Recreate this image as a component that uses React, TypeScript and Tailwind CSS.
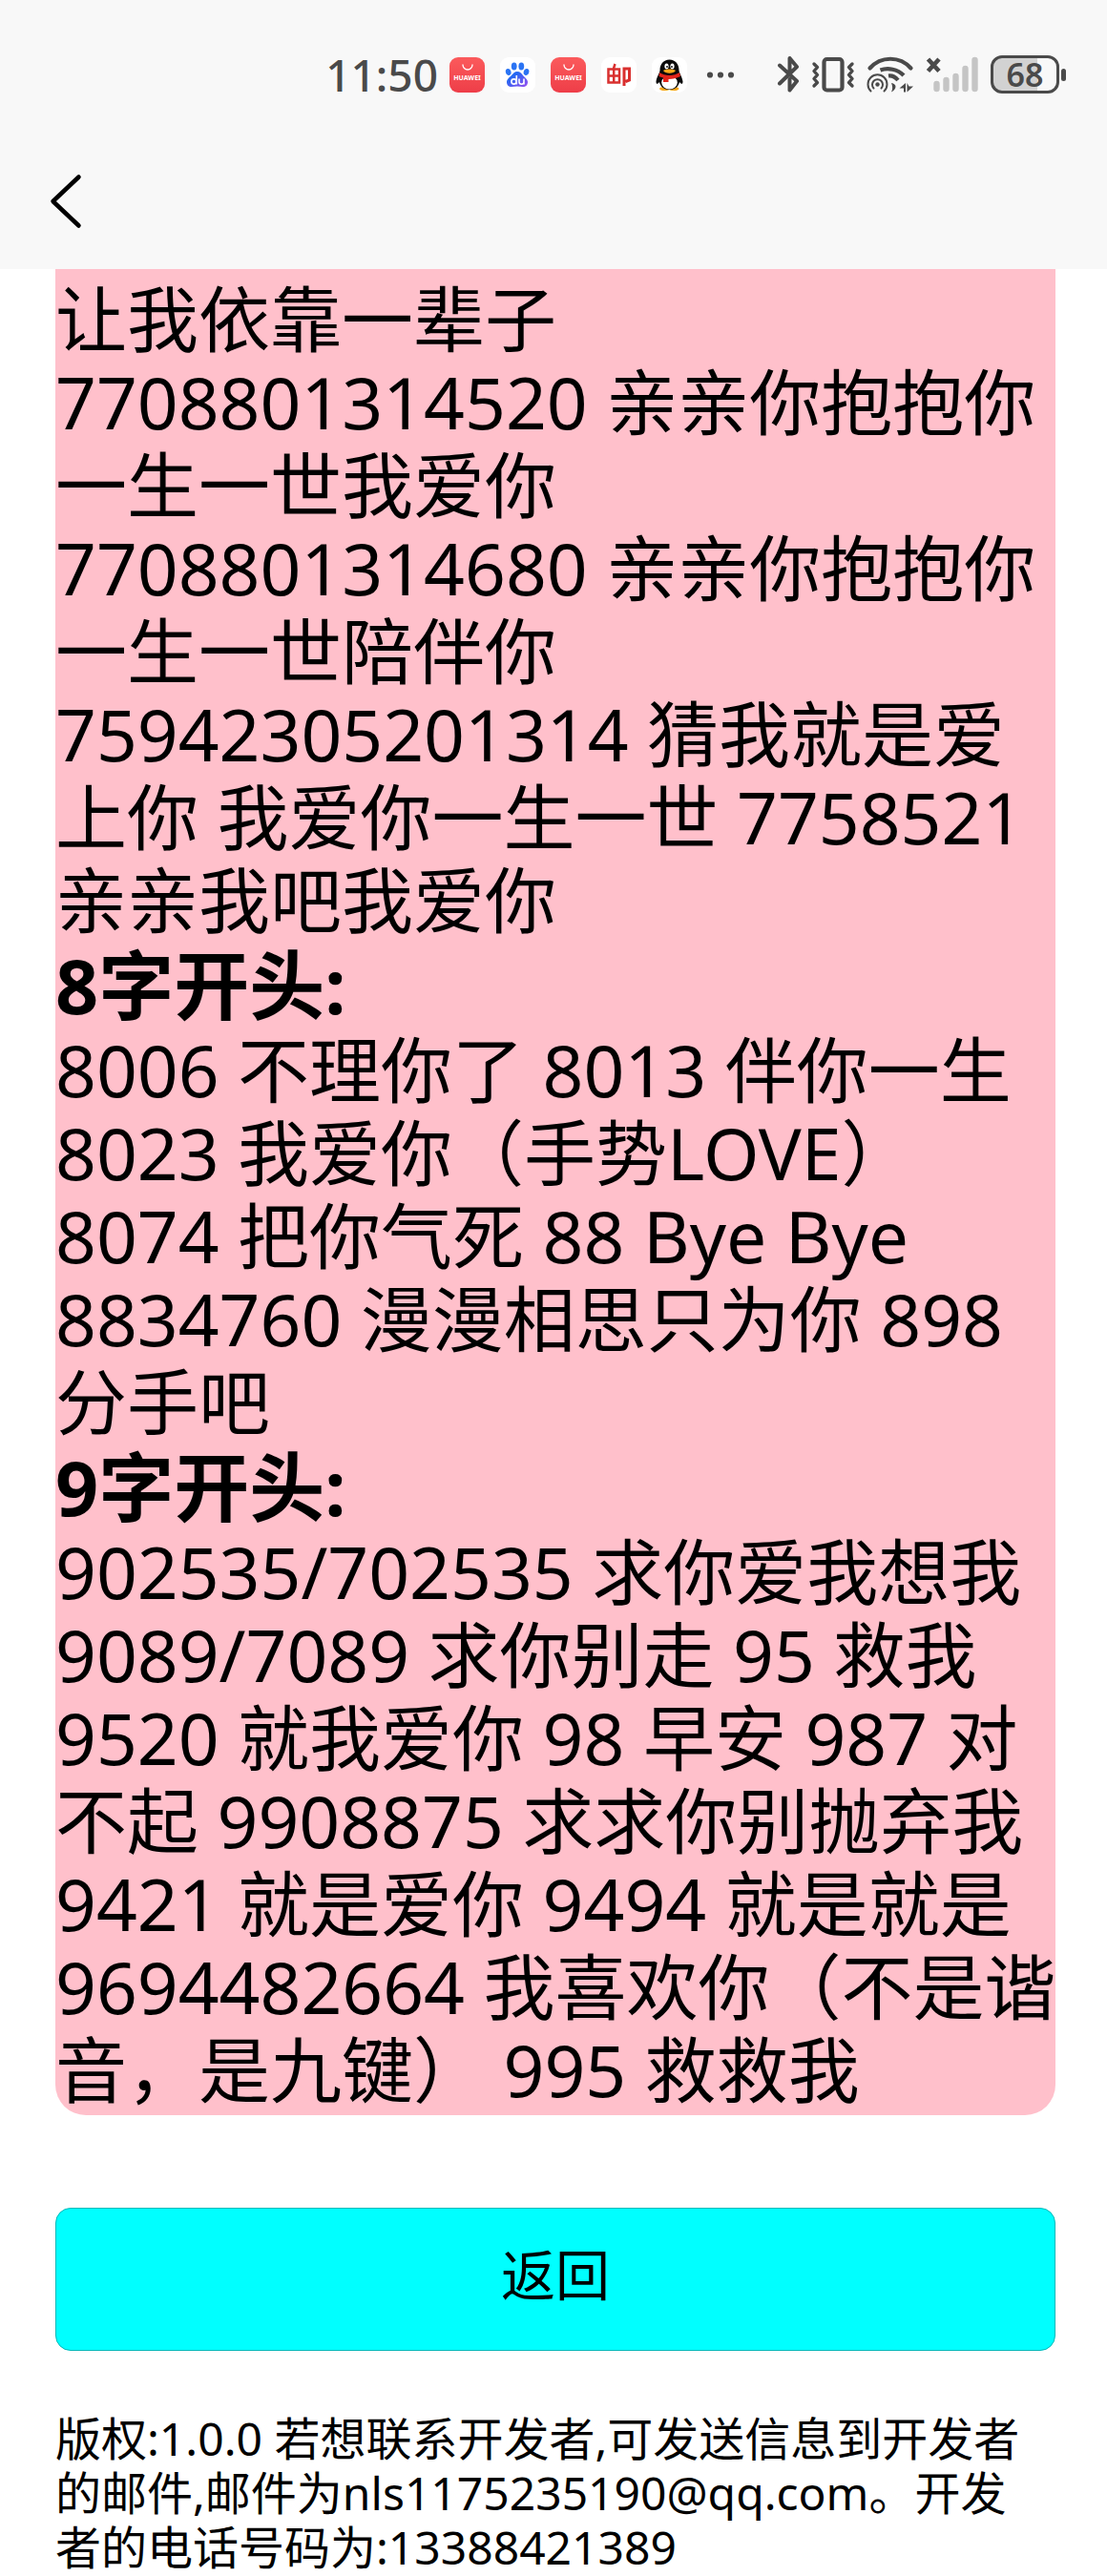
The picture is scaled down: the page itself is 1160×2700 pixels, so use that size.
import React from "react";

const paragraphs: { kind: "text" | "heading"; lines: string[] }[] = [
  {
    kind: "text",
    lines: [
      "让我依靠一辈子",
      "7708801314520 亲亲你抱抱你",
      "一生一世我爱你",
      "7708801314680 亲亲你抱抱你",
      "一生一世陪伴你",
      "75942305201314 猜我就是爱",
      "上你 我爱你一生一世 7758521",
      "亲亲我吧我爱你",
    ],
  },
  { kind: "heading", lines: ["8字开头:"] },
  {
    kind: "text",
    lines: [
      "8006 不理你了 8013 伴你一生",
      "8023 我爱你（手势LOVE）",
      "8074 把你气死 88 Bye Bye",
      "8834760 漫漫相思只为你 898",
      "分手吧",
    ],
  },
  { kind: "heading", lines: ["9字开头:"] },
  {
    kind: "text",
    lines: [
      "902535/702535 求你爱我想我",
      "9089/7089 求你别走 95 救我",
      "9520 就我爱你 98 早安 987 对",
      "不起 9908875 求求你别抛弃我",
      "9421 就是爱你 9494 就是就是",
      "9694482664 我喜欢你（不是谐",
      "音，是九键） 995 救救我",
    ],
  },
];

function HuaweiIcon() {
  return (
    <span className="flex size-[37px] flex-col items-center rounded-[9px] bg-linear-to-b from-[#fb5a5c] to-[#ee3d48] pt-[7px] text-white">
      <svg className="h-[7px] w-3" viewBox="0 0 12 7" fill="none" stroke="currentColor" strokeWidth="1.3" strokeLinecap="round">
        <path d="M1 1a5 5 0 0 0 10 0" />
      </svg>
      <span className="mt-1 text-[7px] leading-[8px] font-bold">HUAWEI</span>
    </span>
  );
}

function BaiduIcon() {
  return (
    <span className="flex size-[37px] justify-center rounded-[9px] bg-white">
      <svg className="size-[37px]" viewBox="0 0 37 37">
        <defs>
          <linearGradient id="paw" x1="0" y1="0" x2="1" y2="1">
            <stop offset="0.3" stopColor="#2468f2" />
            <stop offset="1" stopColor="#9a4df0" />
          </linearGradient>
        </defs>
        <g fill="#2b74f3">
          <ellipse cx="8.700" cy="15.500" rx="2.800" ry="3.500" transform="rotate(-15 8.700 15.500)" />
          <ellipse cx="14.700" cy="9.500" rx="2.900" ry="3.900" />
          <ellipse cx="22.300" cy="9.500" rx="2.900" ry="3.900" />
          <ellipse cx="27.500" cy="15.500" rx="2.800" ry="3.500" transform="rotate(15 27.500 15.500)" />
        </g>
        <path d="M18 15c3 0 4.500 2 6 4s5 4 5 7c0 3-2 5-5 5-2 0-4-.5-6-.5s-4 .5-6 .5c-3 0-5-2-5-5s3-5 5-7 3-4 6-4z" fill="url(#paw)" />
        <g fill="none" stroke="#fff" strokeWidth="1.600">
          <circle cx="14.500" cy="25.500" r="2.600" />
          <path d="M17.300 19v9.500M20 22.500v3.500c0 3 5 3 5 0v-3.500v6" />
        </g>
      </svg>
    </span>
  );
}

function MailIcon() {
  return (
    <span className="flex size-[37px] rounded-[9px] bg-white">
      <svg className="size-[37px]" viewBox="0 0 37 37" fill="none" stroke="#d9302f">
        <path d="M7.500 12.500v14h11.500V12.500zM7.500 19.500h11.500" strokeWidth="2.500" />
        <path d="M14.500 7l-1.300 4v15.500" strokeWidth="2.500" />
        <path d="M24 30V12h5.500v12l-4 1.500" strokeWidth="3" />
      </svg>
    </span>
  );
}

function PenguinIcon() {
  return (
    <span className="flex size-[37px] rounded-[9px] bg-white">
      <svg className="size-[37px]" viewBox="0 0 37 37">
        <ellipse cx="13.500" cy="33" rx="5.500" ry="2" fill="#f8a81b" />
        <ellipse cx="23" cy="33" rx="5.500" ry="2" fill="#f8a81b" />
        <path d="M18.500 2.500c-6.500 0-10 5-10 11 0 3-3.500 7-4 12 0 3 1.500 3 3.500.500C9 31 13 34 18.500 34S28 31 29 26c2 2.500 3.500 2.500 3.500-.500-.500-5-4-9-4-12 0-6-3.500-11-10-11z" fill="#0a0a0a" />
        <ellipse cx="18.500" cy="26.500" rx="8.300" ry="7" fill="#fff" />
        <path d="M8 16c6 4 15 4 21 0l1 4c-4 2-8 3-12.500 3v3H12v-4.500C10 21 8.500 20.500 7.500 20z" fill="#e2231a" />
        <ellipse cx="15.500" cy="9.500" rx="2.100" ry="2.900" fill="#fff" />
        <ellipse cx="21.500" cy="9.500" rx="2.100" ry="2.900" fill="#fff" />
        <circle cx="16" cy="10" r="0.900" />
        <circle cx="21" cy="10" r="0.900" />
        <path d="M12 14c3-2 10-2 13 0-2 3.500-11 3.500-13 0z" fill="#f8a81b" />
      </svg>
    </span>
  );
}

function MoreDots() {
  return (
    <svg className="ml-1 h-[37px] w-[30px]" viewBox="0 0 30 37" fill="#4a4a4a">
      <circle cx="4" cy="18.500" r="3.100" />
      <circle cx="15" cy="18.500" r="3.100" />
      <circle cx="26" cy="18.500" r="3.100" />
    </svg>
  );
}

function BluetoothIcon() {
  return (
    <svg className="h-[38px] w-[24px]" viewBox="0 0 24 38" fill="none" stroke="#4a4a4a" strokeWidth="4" strokeLinecap="round" strokeLinejoin="round">
      <path d="M3 9.500L21 26l-7.500 9.500V24M3 28.500L21 11l-7.500-9V17" />
    </svg>
  );
}

function VibrateIcon() {
  return (
    <svg className="h-[38px] w-[46px]" viewBox="0 0 46 38" fill="none" stroke="#4a4a4a" strokeLinejoin="round" strokeLinecap="round">
      <rect x="13.500" y="3" width="19" height="32.500" rx="3" strokeWidth="4.200" />
      <path d="M3 8l3.500 3.500L3 15.500l3.500 4L3 23.500l3.500 4L3 31M43 8l-3.500 3.500 3.500 4-3.500 4 3.500 4-3.500 4L43 31" strokeWidth="3.400" />
    </svg>
  );
}

function WifiIcon() {
  return (
    <svg className="h-[38px] w-[50px]" viewBox="0 0 50 38" fill="none" stroke="#4a4a4a" strokeLinecap="round">
      <path d="M3.500 12.500C15-.5 35-.5 46.500 12.500" strokeWidth="4.200" />
      <path d="M14.500 14.500c8-3 18-1 24.500 5.500" strokeWidth="4.200" strokeLinecap="butt" />
      <path d="M23 20.500c4-.5 7 1 10 4.500" strokeWidth="4.200" strokeLinecap="butt" />
      <path d="M4.500 36.500a10 10 0 1 1 14 0" strokeWidth="2" />
      <path d="M7.500 33.500a5.500 5.500 0 1 1 8 0" strokeWidth="2" />
      <g fill="#4a4a4a" stroke="none">
        <circle cx="11.500" cy="29.500" r="2.200" />
        <path d="M26 28c6 1 6 6 0 9.500 1.500-3 1.500-6 0-9.500zM34.500 33.500l6.500-5.500v9.500h-2v-4zM42.500 28v9.500l6.500-6h-4.500z" />
      </g>
    </svg>
  );
}

function SignalIcon() {
  return (
    <svg className="h-[38px] w-[56px]" viewBox="0 0 56 38" strokeLinecap="round" fill="none">
      <path d="M2.500 3l11.500 12.500M14 3L2.500 15.500" stroke="#4a4a4a" strokeWidth="4.600" strokeLinecap="butt" />
      <path d="M11.500 29v5M21.500 25v9M31.500 21v13M41.500 13v21M51.500 4v30" stroke="#c5c5c5" strokeWidth="6.400" />
    </svg>
  );
}

function Battery() {
  return (
    <span className="flex items-center gap-[2px] text-[#4a4a4a]">
      <span className="flex h-10 w-[72px] items-center justify-center rounded-[12px] border-[3px] border-current bg-linear-to-r from-[#d2d2d2] from-70% to-[#f8f8f8] to-70% font-['Noto_Sans',sans-serif] text-[34px] leading-none font-semibold">
        68
      </span>
      <span className="h-[13px] w-[5px] rounded-full bg-current" />
    </span>
  );
}

function StatusBar() {
  return (
    <div className="flex items-center justify-end pt-[58px] pr-[43px]">
      <span className="mr-3 font-['Noto_Sans',sans-serif] text-[46px] leading-10 font-medium text-[#4a4a4a]">11:50</span>
      <span className="flex items-center gap-4">
        <HuaweiIcon />
        <BaiduIcon />
        <HuaweiIcon />
        <MailIcon />
        <PenguinIcon />
        <MoreDots />
      </span>
      <span className="ml-11 flex items-center gap-3">
        <BluetoothIcon />
        <VibrateIcon />
        <WifiIcon />
        <SignalIcon />
        <Battery />
      </span>
    </div>
  );
}

export default function App() {
  return (
    <div className="min-h-screen bg-white font-['Noto_Sans','Noto_Sans_CJK_SC',sans-serif] text-black" lang="zh-CN">
      <header className="h-[282px] bg-[#f8f8f8]">
        <StatusBar />
        <nav className="mt-20 pl-12">
          <button type="button" aria-label="后退" className="flex">
            <svg className="h-[66px] w-10" viewBox="0 0 40 66" fill="none" stroke="#000" strokeWidth="4.500" strokeLinecap="round" strokeLinejoin="round">
              <path d="M34.500 7.500L7.500 33l27 25.500" />
            </svg>
          </button>
        </nav>
      </header>
      <main className="pr-[54px] pl-[58px]">
        <section className="rounded-b-[32px] bg-[#ffc0cb] pt-[9px] pb-1 whitespace-nowrap">
          {paragraphs.map((p, i) =>
            p.kind === "heading" ? (
              <h2 key={i} className="text-[79px] leading-[91px] font-bold">
                {p.lines[0]}
              </h2>
            ) : (
              <p key={i} className="text-[75px] leading-[87px]">
                {p.lines.map((line) => (
                  <span key={line} className="block">
                    {line}
                  </span>
                ))}
              </p>
            ),
          )}
        </section>
        <button type="button" className="mt-[97px] block h-[150px] w-full rounded-[16px] border border-[#00b8b8] bg-[#00ffff] pb-2 text-[57px]">
          返回
        </button>
        <footer className="mt-[63px] text-[48px] leading-[57px] whitespace-nowrap">
          <span className="block">版权:1.0.0 若想联系开发者,可发送信息到开发者</span>
          <span className="block">的邮件,邮件为nls1175235190@qq.com。开发</span>
          <span className="block">者的电话号码为:13388421389</span>
        </footer>
      </main>
    </div>
  );
}
